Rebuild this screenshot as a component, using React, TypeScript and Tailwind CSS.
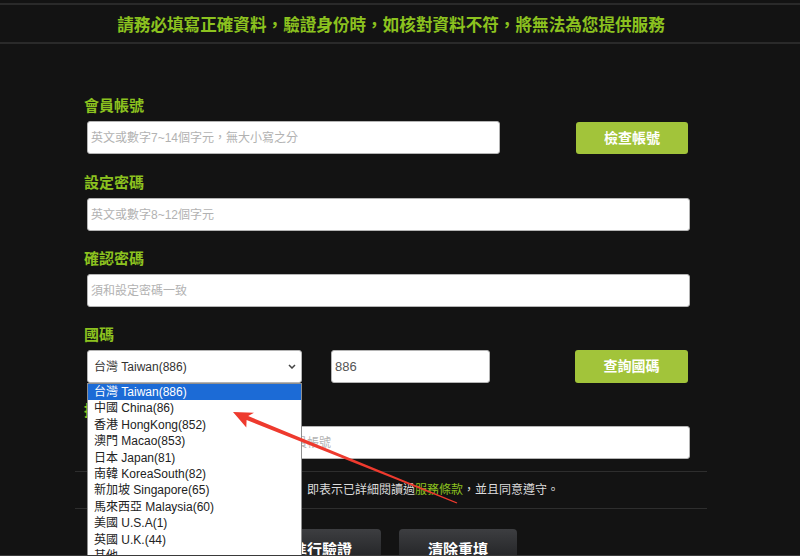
import React from "react";

const countries = [
  "台灣 Taiwan(886)",
  "中國 China(86)",
  "香港 HongKong(852)",
  "澳門 Macao(853)",
  "日本 Japan(81)",
  "南韓 KoreaSouth(82)",
  "新加坡 Singapore(65)",
  "馬來西亞 Malaysia(60)",
  "美國 U.S.A(1)",
  "英國 U.K.(44)",
  "其他",
];

function Label({ children }: { children: React.ReactNode }) {
  return (
    <div className="ml-[9px] h-[20px] text-[15px] font-bold leading-[20px] text-[#8cc21f]">
      {children}
    </div>
  );
}

function TextInput({ placeholder, width }: { placeholder: string; width: string }) {
  return (
    <input
      readOnly
      placeholder={placeholder}
      className={`${width} ml-[12px] mt-[5px] h-[33px] rounded-[3px] border border-[#b4b4b4] bg-white pl-[3px] text-[12px] text-[#555] outline-none placeholder:text-[#b2b2b2]`}
    />
  );
}

export default function App() {
  return (
    <div className="relative box-border h-[556px] w-[800px] overflow-hidden border-b border-[#3a3a3a] bg-[#131313] font-['Liberation_Sans','Noto_Sans_CJK_TC',sans-serif]">
      {/* header */}
      <div className="pt-[3px]">
        <div className="flex h-[41px] items-center justify-center border-y-2 border-[#2a2a2a] pr-[18px] pt-[5px]">
          <p className="text-[16.6px] font-bold leading-none text-[#8cc21f]">
            請務必填寫正確資料，驗證身份時，如核對資料不符，將無法為您提供服務
          </p>
        </div>
      </div>

      {/* form */}
      <div className="mt-[52px] pl-[75px]">
        {/* account */}
        <Label>會員帳號</Label>
        <div className="flex items-start">
          <TextInput width="w-[413px]" placeholder="英文或數字7~14個字元，無大小寫之分" />
          <button className="ml-[76px] mt-[6px] h-[32px] w-[112px] rounded-[3px] bg-[#a2c43a] text-[14px] font-bold text-white">
            檢查帳號
          </button>
        </div>

        <div className="mt-[19px]">
          <Label>設定密碼</Label>
          <TextInput width="w-[603px]" placeholder="英文或數字8~12個字元" />
        </div>

        <div className="mt-[18px]">
          <Label>確認密碼</Label>
          <TextInput width="w-[603px]" placeholder="須和設定密碼一致" />
        </div>

        <div className="mt-[18px]">
          <Label>國碼</Label>
          <div className="mt-[5px] flex items-start">
            <div className="relative ml-[12px]">
              <div className="flex h-[33px] w-[215px] items-center justify-between rounded-[3px] border border-[#b4b4b4] bg-white pl-[6px] pr-[5px] text-[12px] text-[#333] shadow-[0_1px_2px_rgba(0,0,0,0.25)]">
                <span>台灣 Taiwan(886)</span>
                <svg width="8" height="5" viewBox="0 0 8 5">
                  <path d="M1 1 L4 4 L7 1" fill="none" stroke="#444" strokeWidth="1.5" />
                </svg>
              </div>
              {/* open dropdown list */}
              <div className="absolute left-0 top-[33px] z-10 w-[215px] border border-[#8f8f8f] bg-white">
                {countries.map((c, i) => (
                  <div
                    key={c}
                    className={`h-[16.4px] pl-[6px] text-[12px] leading-[16.4px] ${
                      i === 0 ? "bg-[#1c6bd6] text-white" : "text-[#222]"
                    }`}
                  >
                    {c}
                  </div>
                ))}
              </div>
            </div>
            <input
              readOnly
              value="886"
              className="ml-[29px] h-[33px] w-[159px] rounded-[3px] border border-[#b4b4b4] bg-white pl-[3px] text-[13px] text-[#555] outline-none"
            />
            <button className="ml-[85px] h-[33px] w-[113px] rounded-[3px] bg-[#a2c43a] text-[14px] font-bold text-white">
              查詢國碼
            </button>
          </div>
        </div>

        <div className="mt-[18px]">
          <Label>推薦人帳號</Label>
          <TextInput width="w-[603px]" placeholder="選填，如有推薦人，請填寫推薦人的會員帳號" />
        </div>

        {/* terms */}
        <div className="mt-[12px] w-[632px] border-y border-[#2e2e2e]">
          <div className="flex h-[36px] items-center pl-[136px] text-[12px] text-[#dcdcdc]">
            <span>
              按下「進行驗證」即表示已詳細閱讀過<span className="text-[#8cc21f]">服務條款</span>，並且同意遵守。
            </span>
          </div>
        </div>

        {/* buttons */}
        <div className="mt-[20px] flex gap-[18px] pl-[188px]">
          <button className="h-[42px] w-[118px] rounded-[4px] bg-linear-to-b from-[#3d3e41] to-[#1a1b1d] text-[15px] font-bold text-white">
            進行驗證
          </button>
          <button className="h-[42px] w-[118px] rounded-[4px] bg-linear-to-b from-[#3d3e41] to-[#1a1b1d] text-[15px] font-bold text-white">
            清除重填
          </button>
        </div>
      </div>

      {/* red annotation arrow */}
      <svg
        className="pointer-events-none absolute left-0 top-0 z-20"
        width="800"
        height="556"
        viewBox="0 0 800 556"
      >
        <polygon
          points="233,412 254,412.8 248.2,416 457.3,502.4 456.7,503.6 246.6,420 246.3,427.5"
          fill="#ee3a2e"
        />
      </svg>
    </div>
  );
}
